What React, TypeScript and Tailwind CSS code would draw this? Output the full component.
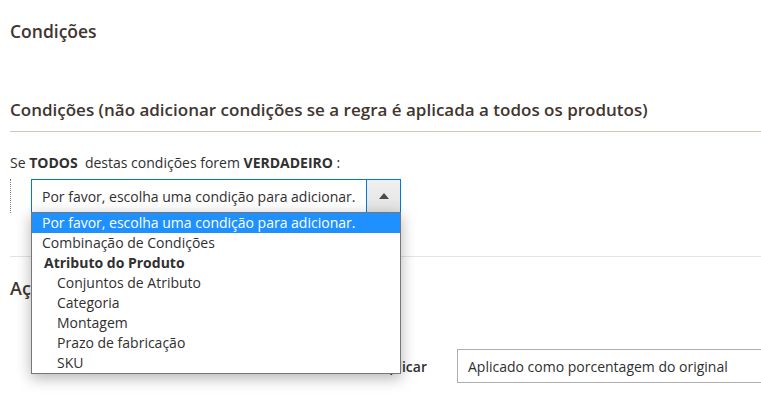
const options = [
  { label: 'Combinação de Condições', kind: 'item' },
  { label: 'Atributo do Produto', kind: 'group' },
  { label: 'Conjuntos de Atributo', kind: 'sub' },
  { label: 'Categoria', kind: 'sub' },
  { label: 'Montagem', kind: 'sub' },
  { label: 'Prazo de fabricação', kind: 'sub' },
  { label: 'SKU', kind: 'sub' },
];

const App = () => {
  return (
    <div
      className="relative min-h-[396px] w-[761px] overflow-hidden bg-white pl-[10px] pt-[21px] text-[#303030]"
      style={{ fontFamily: '"Open Sans", "Liberation Sans", sans-serif' }}
    >
      {/* Section title */}
      <h2 className="text-[17.5px] font-semibold leading-[20px] text-[#41362f]">Condições</h2>

      {/* Conditions fieldset */}
      <div className="mt-[57px] border-b border-[#d1c9b6] pb-[9px]">
        <h3 className="text-[17px] font-semibold leading-[24px] text-[#41362f]">
          Condições (não adicionar condições se a regra é aplicada a todos os produtos)
        </h3>
      </div>

      <div className="relative">
        <p className="mt-[21px] text-[14px] leading-[20px]">
          Se <b>TODOS</b>&nbsp; destas condições forem <b>VERDADEIRO</b> :
        </p>

        <div className="mt-[6px] flex h-[34px] border-l border-dotted border-[#808080] pl-[20px]">
          <div className="flex w-[370px] border border-[#007bdb] bg-white">
            <div className="flex flex-1 items-center pl-[10px] text-[14px]">
              Por favor, escolha uma condição para adicionar.
            </div>
            <div className="flex w-[34px] items-center justify-center border-l border-[#007bdb] bg-gradient-to-b from-[#f0f0f0] to-[#e3e3e3]">
              <span className="block h-0 w-0 border-x-[5px] border-b-[6px] border-x-transparent border-b-[#514943]" />
            </div>
          </div>
        </div>

        {/* Open dropdown list */}
        <div className="absolute left-[21px] top-[59px] z-10 w-[370px] border border-[#777] bg-white text-[14px] leading-[20px] shadow-[0_4px_14px_rgba(0,0,0,0.3)]">
          <div className="bg-[#1e90ff] pl-[10px] text-white">
            Por favor, escolha uma condição para adicionar.
          </div>
          {options.map(o => (
            <div
              key={o.label}
              className={
                o.kind === 'group'
                  ? 'pl-[12px] font-bold'
                  : o.kind === 'sub'
                    ? 'pl-[25px]'
                    : 'pl-[10px]'
              }
            >
              {o.label}
            </div>
          ))}
        </div>
      </div>

      {/* Actions section */}
      <div className="mt-[43px] border-t border-[#e3e3e3] pt-[19px]">
        <h3 className="text-[18px] font-semibold leading-[24px] text-[#41362f]">Ações</h3>

        <div className="mt-[49px] flex items-center">
          <label className="w-[447px] shrink-0 pr-[30px] text-right text-[14px] font-semibold">Aplicar</label>
          <div className="flex h-[34px] w-[340px] shrink-0 items-center border border-[#adadad] pl-[10px] text-[14px]">
            Aplicado como porcentagem do original
          </div>
        </div>
      </div>
    </div>
  );
};

export default App;
